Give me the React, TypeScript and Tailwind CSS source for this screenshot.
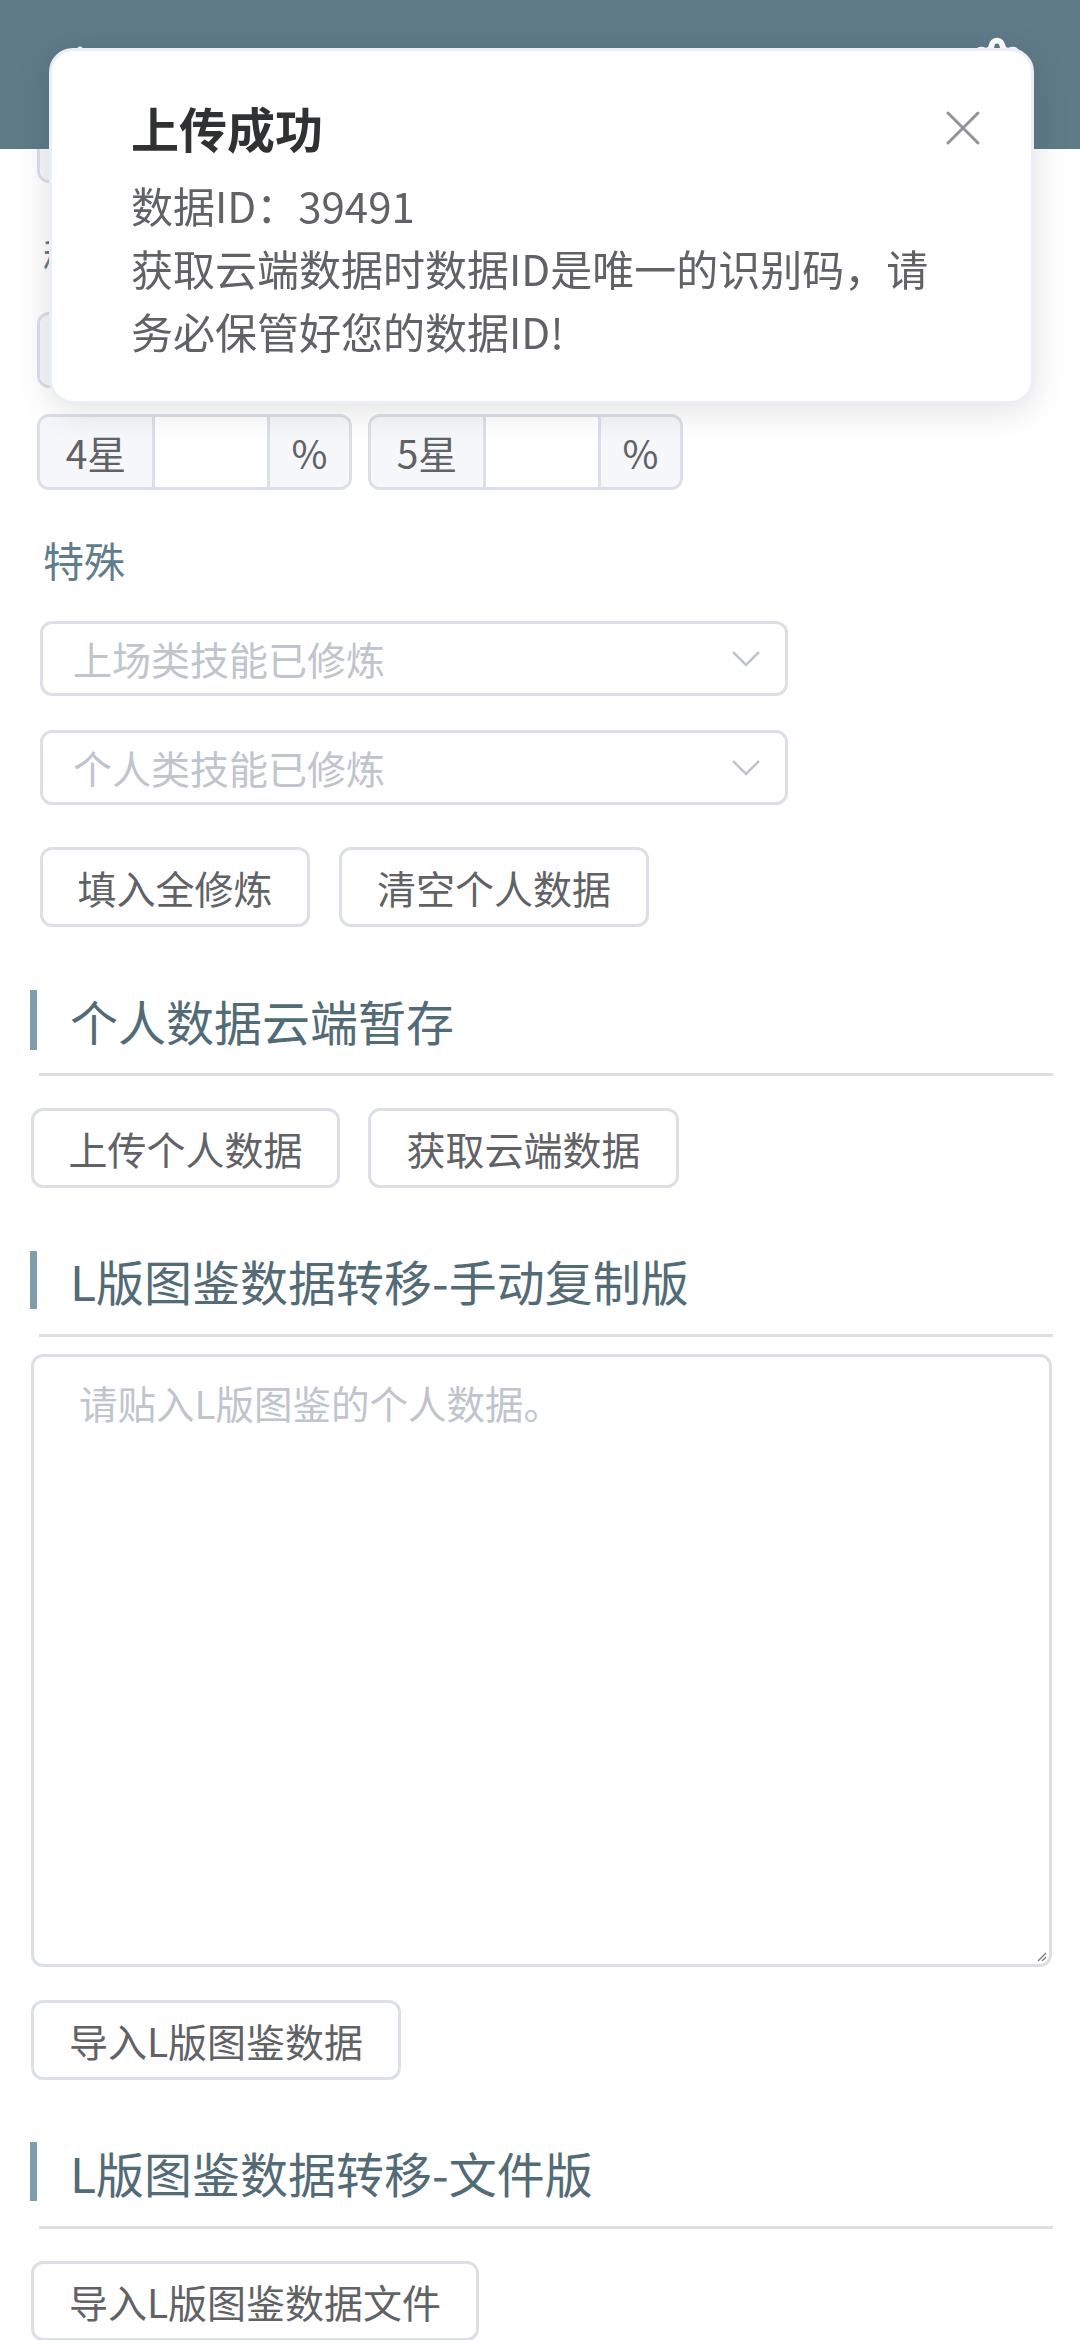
import { ChevronLeft, Settings, X } from 'lucide-react';

function StarGroup({ label }: { label: string }) {
  return (
    <div className="flex h-[76px] w-[315px] overflow-hidden rounded-[12px] border-[3px] border-[#dcdfe6] text-[39px] text-[#606266]">
      <div className="flex w-[115px] items-center justify-center border-r-[3px] border-[#dcdfe6] bg-[#f5f7fa]">{label}</div>
      <div className="w-[112px] bg-white" />
      <div className="flex flex-1 items-center justify-center border-l-[3px] border-[#dcdfe6] bg-[#f5f7fa]">%</div>
    </div>
  );
}

function StarRow({ a, b }: { a: string; b: string }) {
  return (
    <div className="ml-[37px] flex gap-[16px]">
      <StarGroup label={a} />
      <StarGroup label={b} />
    </div>
  );
}

function Select({ placeholder }: { placeholder: string }) {
  return (
    <div className="ml-[40px] flex h-[75px] w-[748px] items-center justify-between rounded-[12px] border-[3px] border-[#dcdfe6] pl-[30px] pr-[24px]">
      <span className="text-[39px] text-[#c0c4cc]">{placeholder}</span>
      <svg width="30" height="18" viewBox="0 0 30 18" fill="none">
        <path d="M2 2 L15 15 L28 2" stroke="#c0c4cc" strokeWidth="2.5" />
      </svg>
    </div>
  );
}

function Btn({ children, w }: { children: string; w: string }) {
  return (
    <button className={`flex h-[80px] items-center justify-center rounded-[12px] border-[3px] border-[#dcdfe6] bg-white text-[39px] text-[#606266] ${w}`}>
      {children}
    </button>
  );
}

function SectionTitle({ children, h }: { children: string; h: string }) {
  return (
    <div className={`ml-[30px] flex items-center border-l-[7px] border-[#7f9dab] pl-[33px] text-[48px] leading-none text-[#526b77] ${h}`}>
      {children}
    </div>
  );
}

function Divider({ mt }: { mt: string }) {
  return <div className={`ml-[39px] mr-[27px] h-[3px] bg-[#dfdfe3] ${mt}`} />;
}

export default function App() {
  return (
    <div className="relative h-[2340px] w-[1080px] overflow-hidden bg-white font-['Noto_Sans_CJK_SC','Noto_Sans',sans-serif]">
      <div className="flex flex-col pt-[107px]">
        <StarRow a="1星" b="2星" />
        <div className="ml-[43px] mt-[42px] flex h-[60px] items-center text-[42px] text-[#5f7d8c]">稀有度</div>
        <div className="ml-[37px] mt-[27px]">
          <StarGroup label="3星" />
        </div>
        <div className="mt-[26px]">
          <StarRow a="4星" b="5星" />
        </div>
        <div className="ml-[43px] mt-[40px] flex h-[60px] items-center text-[41px] text-[#5f7d8c]">特殊</div>
        <div className="mt-[31px]">
          <Select placeholder="上场类技能已修炼" />
        </div>
        <div className="mt-[34px]">
          <Select placeholder="个人类技能已修炼" />
        </div>
        <div className="ml-[40px] mt-[42px] flex gap-[29px]">
          <Btn w="w-[270px]">填入全修炼</Btn>
          <Btn w="w-[310px]">清空个人数据</Btn>
        </div>

        <div className="mt-[63px]">
          <SectionTitle h="h-[60px]">个人数据云端暂存</SectionTitle>
        </div>
        <Divider mt="mt-[23px]" />
        <div className="ml-[31px] mt-[32px] flex gap-[28px]">
          <Btn w="w-[309px]">上传个人数据</Btn>
          <Btn w="w-[311px]">获取云端数据</Btn>
        </div>

        <div className="mt-[63px]">
          <SectionTitle h="h-[58px]">L版图鉴数据转移-手动复制版</SectionTitle>
        </div>
        <Divider mt="mt-[25px]" />
        <div className="relative ml-[31px] mt-[17px] h-[613px] w-[1021px] rounded-[12px] border-[3px] border-[#dcdfe6] px-[45px] pt-[16px]">
          <div className="text-[38.5px] leading-[58px] text-[#c0c4cc]">请贴入L版图鉴的个人数据。</div>
          <svg className="absolute bottom-[2px] right-[2px]" width="12" height="12" viewBox="0 0 12 12">
            <path d="M11 3 L3 11 M11 7 L7 11" stroke="#777" strokeWidth="1.2" />
          </svg>
        </div>
        <div className="ml-[31px] mt-[33px]">
          <Btn w="w-[370px]">导入L版图鉴数据</Btn>
        </div>

        <div className="mt-[62px]">
          <SectionTitle h="h-[59px]">L版图鉴数据转移-文件版</SectionTitle>
        </div>
        <Divider mt="mt-[25px]" />
        <div className="ml-[31px] mt-[32px]">
          <Btn w="w-[448px]">导入L版图鉴数据文件</Btn>
        </div>
      </div>

      {/* header bar */}
      <div className="fixed left-0 top-0 flex h-[149px] w-[1080px] items-start justify-between bg-[#5f7b88] pl-[40px] pr-[55px] pt-[36px] text-white">
        <ChevronLeft size={64} strokeWidth={2.5} className="-mt-[2px]" />
        <Settings size={56} strokeWidth={2.5} />
      </div>

      {/* notification */}
      <div className="fixed left-[49px] top-[48px] h-[356px] w-[985px] rounded-[24px] border-[3px] border-[#ebeef5] bg-white pl-[79px] pt-[40px] shadow-[0_6px_36px_rgba(0,0,0,0.12)]">
        <div className="text-[48px] font-bold leading-[72px] text-[#303133]">上传成功</div>
        <div className="mt-[10px] w-[820px] text-[42px] leading-[63px] text-[#606266]">
          <p>数据ID：39491</p>
          <p>获取云端数据时数据ID是唯一的识别码，请务必保管好您的数据ID!</p>
        </div>
        <X size={60} strokeWidth={1.2} className="absolute right-[38px] top-[47px] text-[#909399]" />
      </div>
    </div>
  );
}
